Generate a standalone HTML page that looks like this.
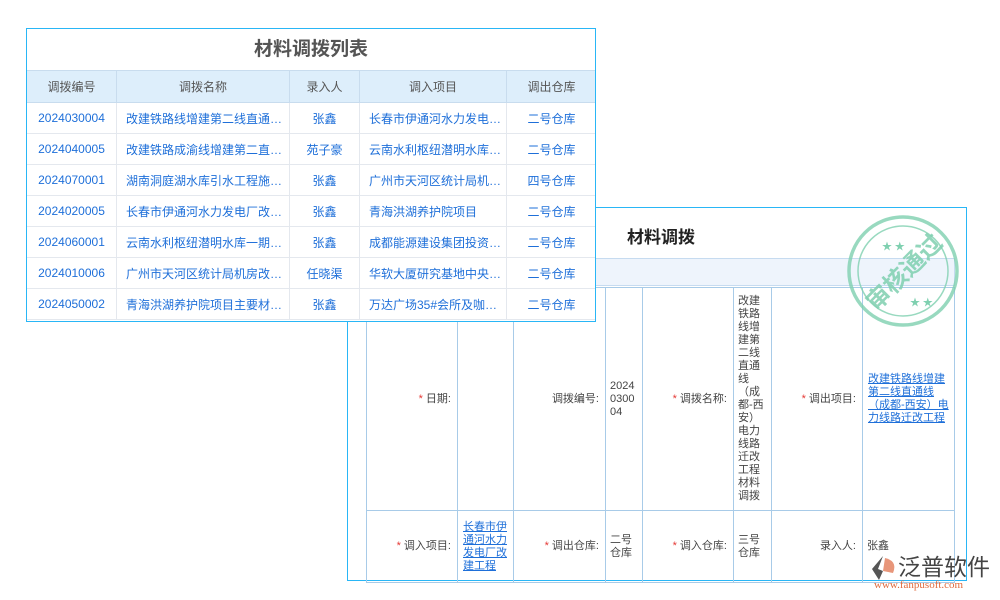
<!DOCTYPE html>
<html><head><meta charset="utf-8"><style>
*{margin:0;padding:0;box-sizing:border-box}
body{width:1000px;height:600px;background:#fff;position:relative;overflow:hidden;font-family:"Liberation Sans","Noto Sans CJK SC",sans-serif}
.a{position:absolute}
#p2{left:347px;top:207px;width:620px;height:374px;border:1px solid #29b6f6;background:#fff}
#p1{left:26px;top:28px;width:570px;height:294px;border:1px solid #29b6f6;background:#fff;z-index:2;overflow:hidden}
table{border-collapse:collapse;table-layout:fixed}
#t1 td{border:1px solid #e4e8ee;height:31px;padding:0;text-align:center;font-size:12px;color:#1e6fd9;white-space:nowrap;overflow:hidden;text-overflow:ellipsis;vertical-align:middle}
#t1 td.l{text-align:left;padding-left:9px;padding-right:4px}
#t1 tr.h td{background:#ddeefb;color:#555;height:32px;border-color:#c8dcee}
#t2 td{border:1px solid #a8cbe8;font-size:11px;color:#444;vertical-align:middle;line-height:13px}
#t2 td.k{text-align:right;padding-right:6px}
.r{color:#e53935}
u{color:#1e6fd9}
</style></head><body>
<div id="p1" class="a">
<div style="height:41px;line-height:41px;text-align:center;font-size:19px;font-weight:bold;color:#555">材料调拨列表</div>
<table id="t1" style="width:570px;margin-left:-1px">
<colgroup><col style="width:90px"><col style="width:173px"><col style="width:70px"><col style="width:147px"><col style="width:90px"></colgroup>
<tr class="h"><td>调拨编号</td><td>调拨名称</td><td>录入人</td><td>调入项目</td><td>调出仓库</td></tr>
<tr><td>2024030004</td><td class="l">改建铁路线增建第二线直通线…</td><td>张鑫</td><td class="l">长春市伊通河水力发电…</td><td>二号仓库</td></tr>
<tr><td>2024040005</td><td class="l">改建铁路成渝线增建第二直通…</td><td>苑子豪</td><td class="l">云南水利枢纽潜明水库…</td><td>二号仓库</td></tr>
<tr><td>2024070001</td><td class="l">湖南洞庭湖水库引水工程施工…</td><td>张鑫</td><td class="l">广州市天河区统计局机…</td><td>四号仓库</td></tr>
<tr><td>2024020005</td><td class="l">长春市伊通河水力发电厂改建…</td><td>张鑫</td><td class="l">青海洪湖养护院项目</td><td>二号仓库</td></tr>
<tr><td>2024060001</td><td class="l">云南水利枢纽潜明水库一期工…</td><td>张鑫</td><td class="l">成都能源建设集团投资…</td><td>二号仓库</td></tr>
<tr><td>2024010006</td><td class="l">广州市天河区统计局机房改造…</td><td>任晓渠</td><td class="l">华软大厦研究基地中央…</td><td>二号仓库</td></tr>
<tr><td>2024050002</td><td class="l">青海洪湖养护院项目主要材料…</td><td>张鑫</td><td class="l">万达广场35#会所及咖啡…</td><td>二号仓库</td></tr>
</table>
</div>
<div id="p2" class="a">
<div class="a" style="left:279px;top:15px;font-size:17px;font-weight:bold;color:#222">材料调拨</div>
<div class="a" style="left:18px;top:50px;width:589px;height:28px;background:#eef4fc;border:1px solid #c6dbf0"></div>
<table id="t2" class="a" style="left:18px;top:79px;width:588px">
<colgroup><col style="width:91px"><col style="width:56px"><col style="width:92px"><col style="width:37px"><col style="width:91px"><col style="width:38px"><col style="width:91px"><col style="width:92px"></colgroup>
<tr style="height:223px"><td class="k"><span class="r">*</span> 日期:</td><td></td><td class="k">调拨编号:</td><td style="padding-left:4px">2024<br>0300<br>04</td><td class="k"><span class="r">*</span> 调拨名称:</td><td style="padding-left:4px">改建<br>铁路<br>线增<br>建第<br>二线<br>直通<br>线<br>（成<br>都-西<br>安）<br>电力<br>线路<br>迁改<br>工程<br>材料<br>调拨</td><td class="k"><span class="r">*</span> 调出项目:</td><td style="padding-left:5px"><u>改建铁路线增建第二线直通线（成都-西安）电力线路迁改工程</u></td></tr>
<tr style="height:72px"><td class="k"><span class="r">*</span> 调入项目:</td><td style="padding-left:5px"><u>长春市伊通河水力发电厂改建工程</u></td><td class="k"><span class="r">*</span> 调出仓库:</td><td style="padding-left:4px">二号<br>仓库</td><td class="k"><span class="r">*</span> 调入仓库:</td><td style="padding-left:4px">三号<br>仓库</td><td class="k">录入人:</td><td style="padding-left:4px">张鑫</td></tr>
</table>
<svg class="a" style="left:498px;top:6px" width="114" height="114" viewBox="0 0 114 114">
<g fill="none" stroke="#7fd0b0" stroke-width="3.5" opacity=".8"><circle cx="57" cy="57" r="54"/><circle cx="57" cy="57" r="45" stroke-width="1.5"/></g>
<text x="57" y="67" text-anchor="middle" font-size="24" font-weight="bold" fill="#7fd0b0" opacity=".85" transform="rotate(-45 57 57)" font-family="Noto Sans CJK SC,sans-serif">审核通过</text>
<text x="36" y="36" font-size="10" fill="#7fd0b0">★ ★</text><text x="64" y="92" font-size="10" fill="#7fd0b0">★ ★</text>
</svg>
</div>
<div class="a" style="left:868px;top:550px;z-index:3">
<svg width="32" height="28" style="position:absolute;left:0;top:4px"><path d="M15 2 L4 15 L11 26 L15 17 L10 15 Z" fill="#555"/><path d="M17 4 Q30 7 25 19 L15 17 Z" fill="#e8967a"/></svg>
<div style="position:absolute;left:30px;top:-2px;font-size:23px;color:#444;white-space:nowrap;font-family:'Noto Sans CJK SC',sans-serif">泛普软件</div>
<div style="position:absolute;left:6px;top:29px;font-size:11px;color:#e06a3c;white-space:nowrap;font-family:'Liberation Serif',serif">www.fanpusoft.com</div>
</div>
</body></html>
